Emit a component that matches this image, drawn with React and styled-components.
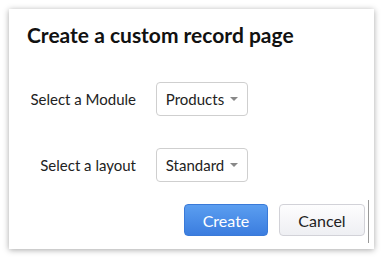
import React from 'react'
import styled, { createGlobalStyle } from 'styled-components';

const Global = createGlobalStyle`
    html, body { margin: 0; padding: 0; background: #ffffff; }
    body { font-family: Lato, "Open Sans", sans-serif; width: 384px; height: 259px; overflow: hidden; }
`

const Page = styled.div`
    padding: 9px 10px 9px 9px;
`

const Dialog = styled.div`
    background: #fff;
    height: 240px;
    box-sizing: border-box;
    box-shadow: 0 1px 6px rgba(0, 0, 0, 0.35);
    padding: 13px 0 0 18px;
    display: flex;
    flex-direction: column;
`

const Title = styled.h2`
    margin: 0;
    font-size: 21px;
    font-weight: 700;
    color: #111;
    line-height: 26px;
`

const Form = styled.div`
    margin-top: 34px;
    display: grid;
    grid-template-columns: 109px auto;
    column-gap: 20px;
    row-gap: 32px;
    align-items: center;
`

const Label = styled.label`
    font-size: 15px;
    color: #222;
    text-align: right;
`

const Select = styled.div`
    width: 92px;
    height: 34px;
    box-sizing: border-box;
    border: 1px solid #cfcfcf;
    border-radius: 4px;
    display: flex;
    align-items: center;
    justify-content: center;
    gap: 6px;
    font-size: 15px;
    color: #222;
`

const Caret = styled.span`
    width: 0;
    height: 0;
    border-left: 4px solid transparent;
    border-right: 4px solid transparent;
    border-top: 4px solid #888;
`

const Actions = styled.div`
    margin-top: 22px;
    display: flex;
    justify-content: flex-end;
    align-items: center;
    gap: 11px;
    padding-right: 9px;
    position: relative;
`

const Button = styled.button`
    height: 32px;
    width: ${p => p.$w}px;
    border-radius: 4px;
    font-family: Lato, sans-serif;
    font-size: 16px;
    cursor: pointer;
    border: 1px solid ${p => p.$primary ? '#3a7ad8' : '#d2d2d8'};
    color: ${p => p.$primary ? '#fff' : '#222'};
    background: ${p => p.$primary
        ? 'linear-gradient(#5b9ef0, #3b7ddf)'
        : 'linear-gradient(#fdfdfe, #eeeff3)'};
`

const Divider = styled.span`
    position: absolute;
    right: 5px;
    top: -4px;
    width: 1.5px;
    height: 43px;
    background: #999;
`

const App = () => {
    return (
        <Page>
            <Global />
            <Dialog>
                <Title>Create a custom record page</Title>
                <Form>
                    <Label>Select a Module</Label>
                    <Select>Products <Caret /></Select>
                    <Label>Select a layout</Label>
                    <Select>Standard <Caret /></Select>
                </Form>
                <Actions>
                    <Button $primary $w={84}>Create</Button>
                    <Button $w={86}>Cancel</Button>
                    <Divider />
                </Actions>
            </Dialog>
        </Page>
    )
}

export default App
